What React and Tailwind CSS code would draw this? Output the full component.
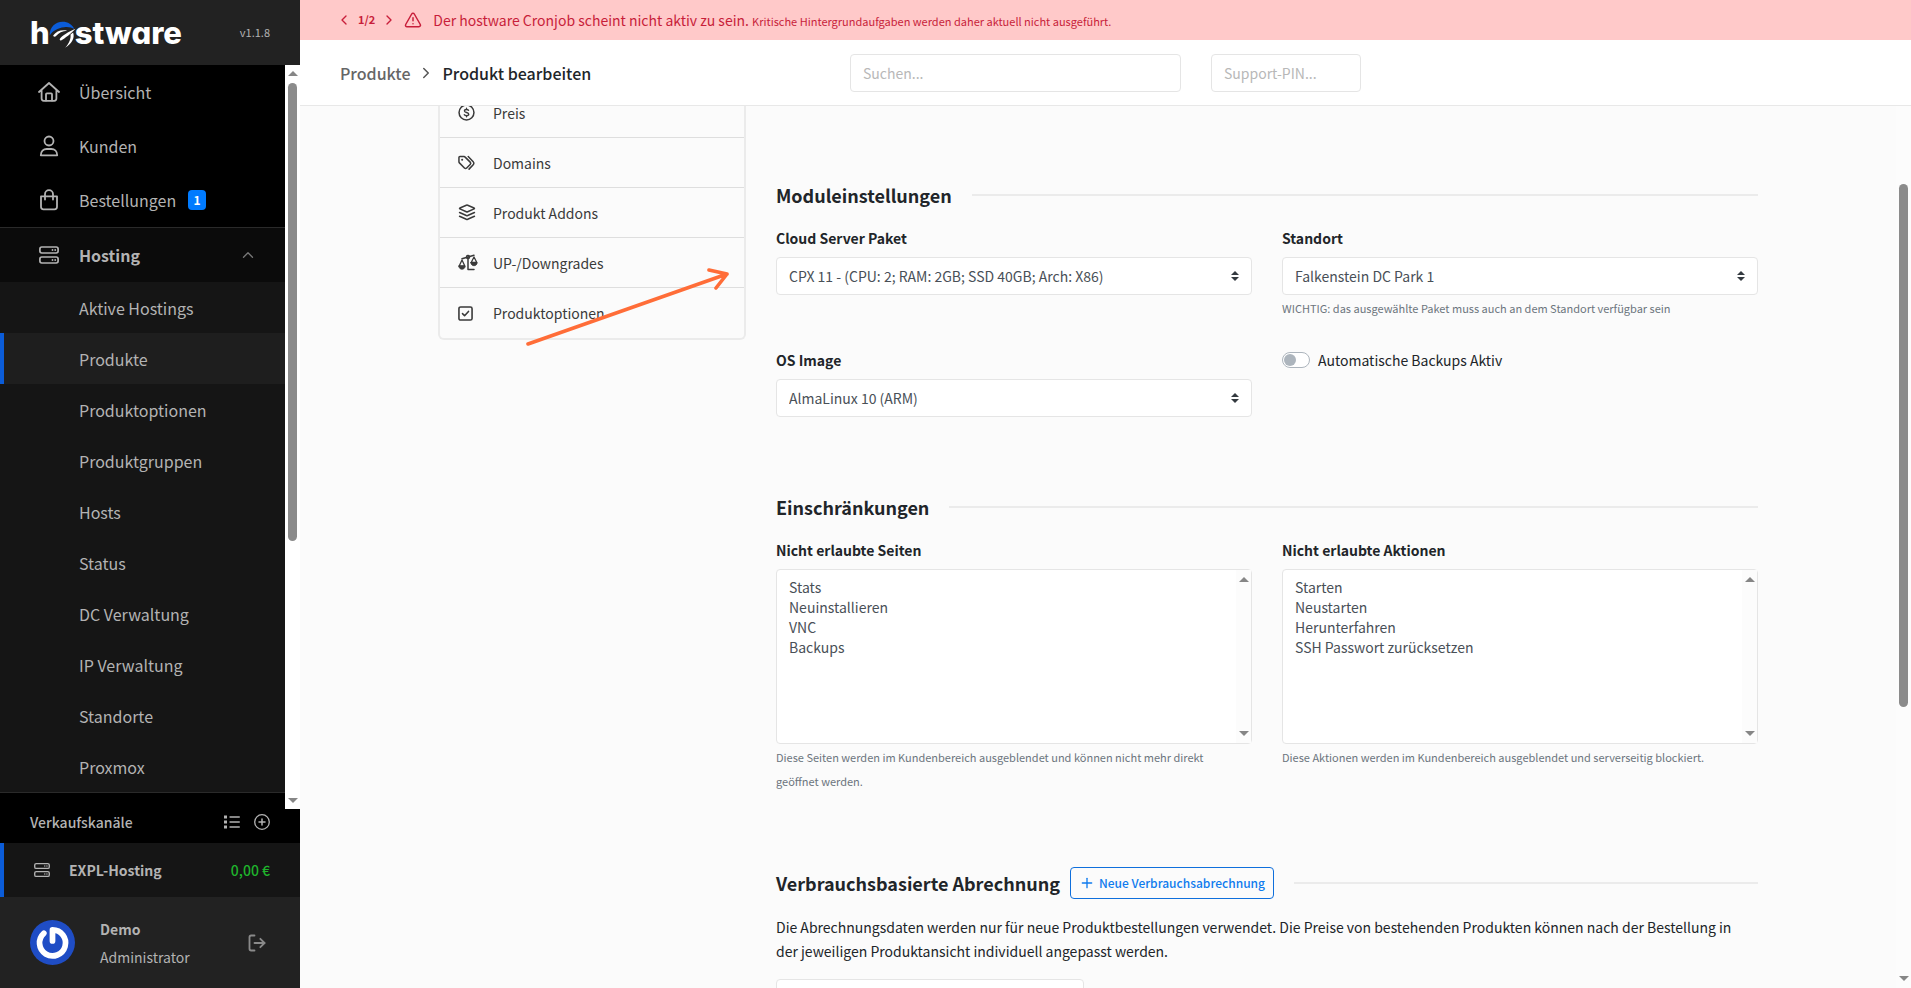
import React from "react";
import { ChevronLeft, ChevronRight, ChevronUp, LogOut, Plus, TriangleAlert } from "lucide-react";

const svg = { fill: "none", stroke: "currentColor", strokeLinecap: "round", strokeLinejoin: "round", "aria-hidden": true };

const HomeIcon = () => (
  <svg {...svg} viewBox="0 0 22 20" className="h-5 w-[22px]" strokeWidth="1.8">
    <path d="M1 10 11 1l10 9M3.600 8v8.600A2.200 2.200 0 0 0 5.800 18.800h10.400A2.200 2.200 0 0 0 18.400 16.600V8" />
    <path d="M8 18.500v-6.200c0-.6.3-.9.9-.9h4.200c.6 0 .9.300.9.900v6.200" />
  </svg>
);
const UserIcon = () => (
  <svg {...svg} viewBox="0 0 22 22" className="h-[22px] w-[22px]" strokeWidth="1.8">
    <circle cx="11" cy="6" r="4.500" />
    <path d="M2.800 20.300c0-3.800 2.600-6.300 5.900-6.300h4.600c3.300 0 5.900 2.500 5.900 6.300z" />
  </svg>
);
const BagIcon = () => (
  <svg {...svg} viewBox="0 0 22 22" className="h-[22px] w-[22px]" strokeWidth="1.8">
    <path d="M3 7.300h16v10.500a2.500 2.500 0 0 1-2.500 2.500h-11A2.500 2.500 0 0 1 3 17.800z" />
    <path d="M7 10.500V5.200a4 4 0 0 1 8 0v5.300" />
  </svg>
);
const ServerIcon = ({ className }) => (
  <svg {...svg} viewBox="0 0 20 18" className={className} strokeWidth="1.7">
    <rect x="0.900" y="1" width="18.200" height="6" rx="1.900" />
    <rect x="0.900" y="11" width="18.200" height="6" rx="1.900" />
    <path d="M13.500 4h.01M16.200 4h.01M13.500 14h.01M16.200 14h.01" strokeWidth="1.800" />
  </svg>
);
const ListIcon = () => (
  <svg {...svg} viewBox="0 0 16 14" className="h-[14px] w-4" strokeWidth="1.300">
    <path d="M6 2h9.300M6 7h9.300M6 12h9.300" />
    <path d="M1.500 2h.01M1.500 7h.01M1.500 12h.01" strokeWidth="3" strokeLinecap="square" />
  </svg>
);
const CirclePlusIcon = () => (
  <svg {...svg} viewBox="0 0 16 16" className="h-4 w-4" strokeWidth="1.300">
    <circle cx="8" cy="8" r="7.300" />
    <path d="M8 5v6M5 8h6" strokeWidth="1.500" />
  </svg>
);
const CoinIcon = () => (
  <svg {...svg} viewBox="0 0 18 18" className="h-[17px] w-[17px]" strokeWidth="1.600">
    <circle cx="9" cy="9" r="7.900" />
    <path d="M11.200 6.700C10.700 6 9.900 5.800 9 5.800c-1.300 0-2.200.6-2.200 1.500 0 2.300 4.600 1.100 4.600 3.500 0 .9-1 1.500-2.400 1.500-1 0-1.900-.3-2.400-1M9 4.500v1.300M9 12.300v1.300" strokeWidth="1.400" />
  </svg>
);
const TagsIcon = () => (
  <svg {...svg} viewBox="0 0 18 16" className="h-4 w-[17px]" strokeWidth="1.600">
    <path d="M1 2.300v4.400c0 .5.200.9.500 1.200l5.300 5.300c.7.700 1.700.7 2.400 0l3.700-3.700c.7-.7.7-1.700 0-2.400L7.600 1.800A1.800 1.800 0 0 0 6.400 1.200H2.100C1.500 1.200 1 1.700 1 2.300z" />
    <path d="m10.800 1.200 5.300 5.500c.9.900.9 2.300 0 3.200l-4.400 4.600" />
    <path d="M4.400 4.600h.01" strokeWidth="2.200" />
  </svg>
);
const LayersIcon = () => (
  <svg {...svg} viewBox="0 0 18 18" className="h-[17px] w-[18px]" strokeWidth="1.600">
    <path d="M8.300 1.300 1.500 4.200c-.5.200-.5.800 0 1l6.800 3c.5.200.9.200 1.400 0l6.800-3c.5-.2.500-.8 0-1L9.700 1.300c-.5-.2-.9-.2-1.400 0z" />
    <path d="m1.100 9 7.200 3.200c.5.200.9.200 1.400 0L16.900 9M1.100 13l7.200 3.200c.5.200.9.200 1.400 0l7.200-3.200" />
  </svg>
);
const ScalesIcon = () => (
  <svg {...svg} viewBox="0 0 20 17" className="h-[17px] w-5" strokeWidth="1.500">
    <path d="M4 4.800 16 1.200M10 3.500v12h6" />
    <circle cx="10" cy="3" r="1.500" />
    <path d="M4 6 1.200 12h5.600zM16 3 13.200 8.500h5.600z" strokeWidth="1.300" />
    <path d="M.8 12.200h6.400c-.3 2-1.500 3-3.200 3s-2.900-1-3.200-3zM12.800 8.700h6.400c-.3 2-1.500 3-3.200 3s-2.900-1-3.200-3z" fill="currentColor" strokeWidth=".8" />
  </svg>
);
const CheckSquareIcon = () => (
  <svg {...svg} viewBox="0 0 16 16" className="h-[15px] w-[15px]" strokeWidth="1.700">
    <rect x="1" y="1" width="14" height="14" rx="1.800" />
    <path d="m4.800 8.200 2.200 2.200 4.200-4.600" />
  </svg>
);

const SortArrows = () => (
  <svg viewBox="0 0 8 10" className="h-[10px] w-2 fill-[#343a40]" aria-hidden="true">
    <path d="M4 0 8 4H0zM4 10 0 6h8z" />
  </svg>
);

const Caret = ({ down }) => (
  <svg viewBox="0 0 10 5" className="h-[5px] w-[10px] shrink-0 fill-[#868686]" aria-hidden="true">
    <path d={down ? "M0 0h10L5 5z" : "M0 5h10L5 0z"} />
  </svg>
);

const NAV = [
  ["Übersicht", HomeIcon],
  ["Kunden", UserIcon],
  ["Bestellungen", BagIcon, 1],
];
const HOSTING = ["Aktive Hostings", "Produkte", "Produktoptionen", "Produktgruppen", "Hosts", "Status", "DC Verwaltung", "IP Verwaltung", "Standorte", "Proxmox"];
const TABS = [
  ["Preis", CoinIcon],
  ["Domains", TagsIcon],
  ["Produkt Addons", LayersIcon],
  ["UP-/Downgrades", ScalesIcon],
  ["Produktoptionen", CheckSquareIcon],
];

function Logo() {
  return (
    <a href="#" aria-label="hostware" className="flex items-center font-['Inter',sans-serif] text-[31px] leading-none font-extrabold text-white [font-feature-settings:'cv11']">
      <span>h</span>
      <svg viewBox="0 0 26 26" className="-mx-px mt-[4px] h-[27px] w-[27px]" aria-hidden="true">
        <path d="M.6 14C.6 6 6 .8 13 .8c5.200 0 9.400 2.500 11.300 7C22 6.200 18.500 5.500 14.500 6 8.500 6.600 3.500 9.500.6 14z" fill="#0b5cd8" />
        <path d="M4.200 13.800C7 9.700 12 8 17.500 9.300c-4.600.2-8.300 2-10.700 5.200-.9 1.200-3.300.6-2.600-.7z" fill="#fff" />
        <path d="M10.500 17.200C12 14.500 18.500 10.500 25.500 7.500c-4 4.500-10.500 9.500-13.500 11-1.200.6-2.100-.2-1.500-1.300z" fill="#fff" />
        <path d="M23.200 11c2 5.500-1.500 11-7.700 14.800 3.900-4.400 5.800-9 5.200-12.900z" fill="#fff" />
      </svg>
      <span>stware</span>
    </a>
  );
}

function Sidebar() {
  return (
    <aside className="flex w-[300px] shrink-0 flex-col bg-black text-[#b3b3b3]">
      <div className="flex h-[65px] shrink-0 items-center justify-between bg-[#222] px-[30px]">
        <Logo />
        <span className="text-[11px]">v1.1.8</span>
      </div>
      <div className="flex min-h-0 flex-1">
        <nav className="min-w-0 flex-1 overflow-hidden text-base">
          {NAV.map(([label, Icon, badge]) => (
            <a key={label} href="#" className="flex h-[54px] items-center pl-[38px]">
              <span className="w-[41px]"><Icon /></span>
              {label}
              {badge && <span className="ml-3 flex h-5 w-[18px] items-center justify-center rounded-sm bg-[#007bff] text-xs font-bold text-white">{badge}</span>}
            </a>
          ))}
          <div className="border-y border-[#2a2a2a] bg-[#151515]">
            <a href="#" className="flex h-[54px] items-center bg-[#0b0b0b] pr-[28px] pl-[38px] font-bold">
              <span className="w-[41px]"><ServerIcon className="h-[18px] w-[22px]" /></span>
              <span className="flex-1">Hosting</span>
              <ChevronUp size={18} strokeWidth={1.8} className="text-[#777]" />
            </a>
            {HOSTING.map((label) => (
              <a
                key={label}
                href="#"
                className={label === "Produkte" ? "flex h-[51px] items-center border-l-4 border-[#0b5cd8] bg-[#1e1e1e] pl-[75px]" : "flex h-[51px] items-center pl-[79px]"}
              >
                {label}
              </a>
            ))}
          </div>
        </nav>
        <div aria-hidden="true" className="flex w-[15px] flex-col items-center justify-between bg-white py-[6px]">
          <Caret />
          <div className="mt-[7px] flex w-[9px] flex-1 flex-col">
            <div className="h-[64%] rounded-full bg-[#8b8b8b]" />
          </div>
          <Caret down />
        </div>
      </div>
      <div className="flex h-[34px] items-start justify-between px-[30px] pt-[3px] text-sm leading-5 font-medium">
        <h2>Verkaufskanäle</h2>
        <div className="flex items-center gap-[14px] pt-[2px]">
          <button type="button" aria-label="Liste"><ListIcon /></button>
          <button type="button" aria-label="Hinzufügen"><CirclePlusIcon /></button>
        </div>
      </div>
      <a href="#" className="flex h-[54px] items-center border-l-4 border-[#0b5cd8] bg-[#151515] pr-[30px] pl-[30px] text-sm">
        <ServerIcon className="h-4 w-4" />
        <span className="ml-[19px] flex-1 font-bold">EXPL-Hosting</span>
        <span className="font-medium text-[#1fb32c]">0,00 €</span>
      </a>
      <div className="flex h-[91px] items-center bg-[#222] px-[30px]">
        <svg viewBox="0 0 44 44" className="h-[45px] w-[45px]" role="img" aria-label="Demo">
          <circle cx="22" cy="22" r="22" fill="#1f4dc5" />
          <path d="M22 20.500V9.700A12.700 12.700 0 1 1 13.500 13" fill="none" stroke="#fff" strokeWidth="5.600" strokeLinecap="round" strokeLinejoin="round" />
        </svg>
        <div className="ml-[25px] flex-1 text-sm leading-7">
          <p className="font-bold">Demo</p>
          <p>Administrator</p>
        </div>
        <button type="button" aria-label="Abmelden" className="mr-[3px] text-[#8a8a8a]"><LogOut size={20} strokeWidth={2.200} /></button>
      </div>
    </aside>
  );
}

function Section({ title, action, children }) {
  return (
    <section>
      <div className="flex h-8 items-center">
        <h2 className="text-lg leading-8 font-bold">{title}</h2>
        {action}
        <div className="ml-5 h-[2px] flex-1 bg-[#ebebeb]" />
      </div>
      {children}
    </section>
  );
}

function SelectField({ id, label, value, hint }) {
  return (
    <div>
      <label htmlFor={id} className="block leading-6 font-bold">{label}</label>
      <div className="relative mt-[7px] flex">
        <select id={id} className="h-[38px] w-full appearance-none rounded-sm border border-[#e5e5e5] bg-white pr-8 pl-3 text-[#495057]">
          <option>{value}</option>
        </select>
        <span className="pointer-events-none absolute inset-y-0 right-[13px] flex items-center"><SortArrows /></span>
      </div>
      {hint && <p className="mt-px text-[11px] leading-6 text-[#6c757d]">{hint}</p>}
    </div>
  );
}

function ListField({ id, label, options, hint }) {
  return (
    <div>
      <label htmlFor={id} className="block leading-6 font-bold">{label}</label>
      <div className="mt-[7px] flex h-[175px] rounded-sm border border-[#e5e5e5] bg-white">
        <select id={id} multiple className="min-w-0 flex-1 overflow-hidden py-[7px] pl-3 text-[#495057]">
          {options.map((o) => (
            <option key={o} className="h-5 p-0 leading-5">{o}</option>
          ))}
        </select>
        <div aria-hidden="true" className="flex w-[15px] flex-col items-center justify-between bg-[#fcfcfc] py-[7px]">
          <Caret />
          <Caret down />
        </div>
      </div>
      <p className="mt-px pr-5 text-[11px] leading-6 text-[#6c757d]">{hint}</p>
    </div>
  );
}

export default function App() {
  return (
    <div className="flex h-screen overflow-hidden bg-[#fbfbfb] font-['Noto_Sans_CJK_SC',sans-serif] text-sm text-[#212529]">
      <Sidebar />
      <div className="flex min-w-0 flex-1 flex-col">
        <div role="alert" className="flex h-10 shrink-0 items-center bg-[#ffc9c9] pl-[36px] text-[#c81e3a]">
          <button type="button" aria-label="Zurück"><ChevronLeft size={16} strokeWidth={2} /></button>
          <span className="mx-[6px] text-[11px] font-bold">1/2</span>
          <button type="button" aria-label="Weiter"><ChevronRight size={16} strokeWidth={2} /></button>
          <TriangleAlert size={18} strokeWidth={2} className="mx-[7px]" />
          <p className="ml-1">Der hostware Cronjob scheint nicht aktiv zu sein. <small className="text-[11px]">Kritische Hintergrundaufgaben werden daher aktuell nicht ausgeführt.</small></p>
        </div>
        <header className="grid h-[66px] shrink-0 grid-cols-[1fr_auto_1fr] items-center border-b border-[#e8e8e8] bg-white">
          <nav className="flex items-center pl-10 text-base font-medium">
            <a href="#" className="text-[#666]">Produkte</a>
            <ChevronRight size={18} strokeWidth={2} className="mx-[7px] text-[#555]" />
            <h1>Produkt bearbeiten</h1>
          </nav>
          <div className="flex gap-[30px]">
            <input type="search" aria-label="Suchen" placeholder="Suchen..." className="h-[38px] w-[331px] rounded-sm border border-[#e5e5e5] px-3 placeholder:text-[#b8b8b8]" />
            <input type="text" aria-label="Support-PIN" placeholder="Support-PIN..." className="h-[38px] w-[150px] rounded-sm border border-[#e5e5e5] px-3 placeholder:text-[#b8b8b8]" />
          </div>
        </header>
        <div className="flex min-h-0 flex-1">
          <main className="min-w-0 flex-1 overflow-hidden">
            <div className="relative mx-auto -mt-[18px] flex max-w-[1320px] items-start gap-[30px]">
              <nav className="w-[308px] shrink-0 overflow-hidden rounded-md border-2 border-t-0 border-[#ebebeb]">
                {TABS.map(([label, Icon]) => (
                  <a key={label} href="#" className="flex h-[50px] items-center border-b border-[#dedede] pl-[18px] leading-[14px] text-[#3a3a3a] last:border-b-0">
                    <span className="w-[35px]"><Icon /></span>
                    {label}
                  </a>
                ))}
              </nav>
              <svg viewBox="0 0 204 78" className="pointer-events-none absolute top-[180px] left-[87px] h-[78px] w-[204px]" fill="none" stroke="#ff6d38" strokeWidth="3.600" strokeLinecap="round" strokeLinejoin="round" aria-hidden="true">
                <path d="M3 76 202 6M184 2l18 4-11 14" />
              </svg>
              <div className="min-w-0 flex-1 pt-[91px]">
                <Section title="Moduleinstellungen">
                  <div className="mt-[15px] grid grid-cols-2 gap-x-[30px]">
                    <SelectField id="package" label="Cloud Server Paket" value="CPX 11 - (CPU: 2; RAM: 2GB; SSD 40GB; Arch: X86)" />
                    <SelectField id="location" label="Standort" value="Falkenstein DC Park 1" hint="WICHTIG: das ausgewählte Paket muss auch an dem Standort verfügbar sein" />
                  </div>
                  <div className="mt-7 grid grid-cols-2 gap-x-[30px]">
                    <SelectField id="image" label="OS Image" value="AlmaLinux 10 (ARM)" />
                    <label className="flex h-6 items-center gap-2">
                      <input type="checkbox" role="switch" className="h-4 w-7 appearance-none rounded-full border border-[#adb5bd] bg-white before:m-px before:block before:size-3 before:rounded-full before:bg-[#adb5bd] checked:before:ml-[13px]" />
                      Automatische Backups Aktiv
                    </label>
                  </div>
                </Section>
                <div className="h-[74px]" />
                <Section title="Einschränkungen">
                  <div className="mt-[15px] grid grid-cols-2 gap-x-[30px]">
                    <ListField id="pages" label="Nicht erlaubte Seiten" options={["Stats", "Neuinstallieren", "VNC", "Backups"]} hint="Diese Seiten werden im Kundenbereich ausgeblendet und können nicht mehr direkt geöffnet werden." />
                    <ListField id="actions" label="Nicht erlaubte Aktionen" options={["Starten", "Neustarten", "Herunterfahren", "SSH Passwort zurücksetzen"]} hint="Diese Aktionen werden im Kundenbereich ausgeblendet und serverseitig blockiert." />
                  </div>
                </Section>
                <div className="h-[74px]" />
                <Section
                  title="Verbrauchsbasierte Abrechnung"
                  action={
                    <button type="button" className="ml-[10px] flex h-8 items-center gap-1 rounded-sm border border-[#0f6fdc] px-2 text-xs font-medium text-[#0f7bee]">
                      <Plus size={16} strokeWidth={2} />
                      Neue Verbrauchsabrechnung
                    </button>
                  }
                >
                  <p className="mt-4 pr-5 leading-6">
                    Die Abrechnungsdaten werden nur für neue Produktbestellungen verwendet. Die Preise von bestehenden Produkten können nach der Bestellung in der jeweiligen Produktansicht individuell angepasst werden.
                  </p>
                  <div className="mt-4 h-[100px] w-[308px] rounded-sm border border-[#e5e5e5] bg-white" />
                </Section>
              </div>
            </div>
          </main>
          <div aria-hidden="true" className="flex w-[15px] flex-col items-center bg-[#fcfcfc] pt-[78px] pb-[7px]">
            <div className="w-[9px] flex-1">
              <div className="h-[66%] rounded-full bg-[#8b8b8b]" />
            </div>
            <Caret down />
          </div>
        </div>
      </div>
    </div>
  );
}
